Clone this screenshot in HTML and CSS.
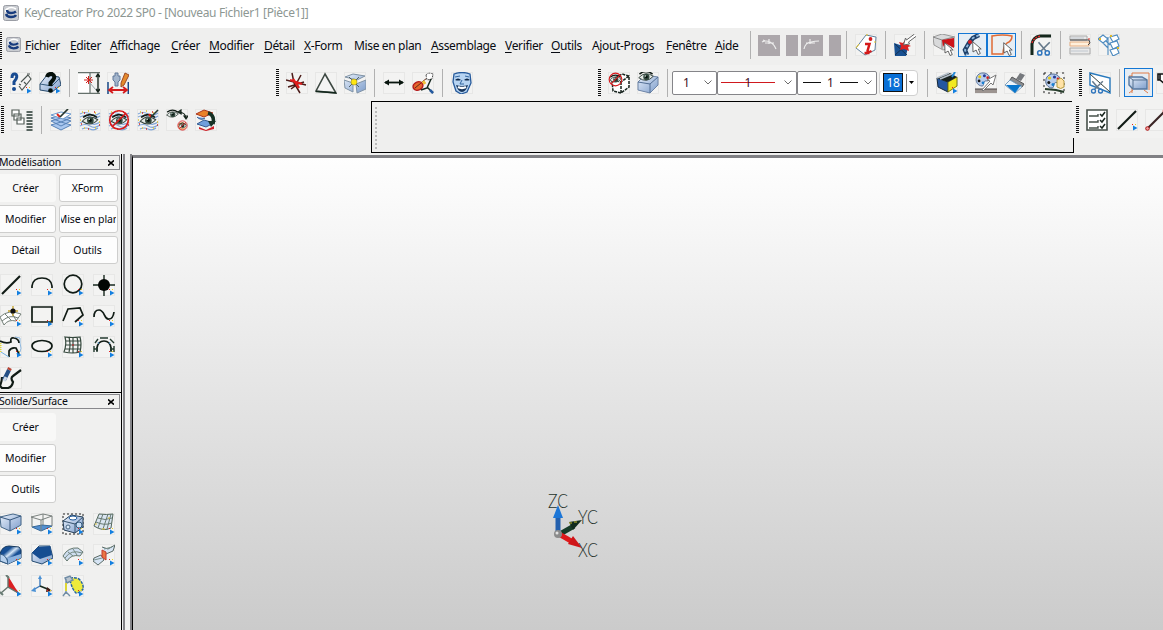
FILE: index.html
```html
<!DOCTYPE html>
<html lang="fr">
<head>
<meta charset="utf-8">
<title>KeyCreator Pro 2022 SP0</title>
<link rel="stylesheet" href="styles.css">
</head>
<body>
<svg class="defs" width="0" height="0">
  <defs>
    <linearGradient id="steel" x1="0" y1="0" x2="1" y2="1"><stop offset="0" stop-color="#e8f0fb"/><stop offset="1" stop-color="#7d9dcb"/></linearGradient>
    <linearGradient id="deep" x1="0" y1="0" x2="1" y2="1"><stop offset="0" stop-color="#164f95"/><stop offset=".3" stop-color="#174f94"/><stop offset=".45" stop-color="#d6e7f7"/><stop offset=".6" stop-color="#174f94"/><stop offset="1" stop-color="#1d5fae"/></linearGradient>
  </defs>
  <symbol id="logo" viewBox="0 0 16 16"><rect x=".5" y=".5" width="15" height="15" rx="2" fill="#c9ccd1" stroke="#9a9da4"/><path d="M13 4Q8 1 4 4T7 7.500Q11 8 13 6" fill="none" stroke="#fff" stroke-width="1.6"/><path d="M4 5Q4 8 8 8Q11 8 13 6.500M3 9Q4 12 8 12Q12 12 13 10" fill="none" stroke="#173b7d" stroke-width="2.4"/></symbol>
  <symbol id="more" viewBox="0 0 22 22"><path d="M17 16.5v5l4.5-2.5z" fill="#137fe0"/><path d="M16 15h1v1h-1z" fill="#e02020"/><path d="M19 15h1v1h-1z" fill="#e8d020"/></symbol>
  <symbol id="eye" viewBox="0 0 22 22"><path d="M1 12Q10 2 21 10Q12 20 1 12z" fill="#e3e8e5" stroke="#34423b" stroke-width="1.3"/><circle cx="11.5" cy="11" r="4.3" fill="#33493f"/><circle cx="11.5" cy="11" r="1.8" fill="#07110c"/><circle cx="10" cy="9.5" r="1" fill="#dce9e3"/><path d="M2 7Q11 0 20 7" class="k" stroke-width=".8"/></symbol>
  <symbol id="waves" viewBox="0 0 22 22"><path d="M1 5q5-3 10 0t10-1M1 8q5-3 10 0t10-1M1 14q5-3 10 0t10-1M1 17q5-3 10 0t10-1M3 20q4-2 8 0t8-1" fill="none" stroke="#7fa5d8" stroke-width="1.2"/><path d="M3 3h1m5-1h1m6 2h1M1 11h1m18 2h1M5 19h1m10 0h1" stroke="#e3c92a" stroke-width="1.5"/><path d="M5 4h1m9-1h1M2 15h1m17 1h1M9 20h1" stroke="#d02b24" stroke-width="1.3"/></symbol>
  <symbol id="no" viewBox="0 0 22 22"><circle cx="11" cy="11" r="9.3" fill="none" stroke="#d8191c" stroke-width="1.6"/><path d="M4.5 17.5L17.5 4.5" stroke="#d8191c" stroke-width="1.6"/></symbol>
  <symbol id="cursor" viewBox="0 0 10 14"><path d="M.7.7L9.2 8H6.3l2 4.5-2.2 1-2-4.5L1 11z" fill="#fff" stroke="#555" stroke-width=".9"/></symbol>
  <symbol id="scissors" viewBox="0 0 12 12"><path d="M2 1l6 7M11 1L4 8" stroke="#66798a" stroke-width="1.3"/><circle cx="3" cy="9.5" r="1.700" fill="none" stroke="#2f75bd" stroke-width="1.2"/><circle cx="9" cy="9.5" r="1.700" fill="none" stroke="#2f75bd" stroke-width="1.2"/></symbol>
  <symbol id="palette" viewBox="0 0 16 16"><path d="M8 1C16 1 17 10 12 9.5S10 15 7 15C-2 14-1 1 8 1z" fill="#b9cdec" stroke="#526c93"/><circle cx="4.5" cy="5" r="1.6" fill="#e6ca19"/><circle cx="9.5" cy="4" r="1.6" fill="#253c99"/><circle cx="3.8" cy="9.5" r="1.5" fill="#151515"/><circle cx="13" cy="6" r="1.4" fill="#d51e1e"/><circle cx="8" cy="11.5" r="1.5" fill="#187fd1"/></symbol>
</svg>

<header class="titlebar"><svg class="logo"><use href="#logo"/></svg><h1>KeyCreator Pro 2022 SP0 - [Nouveau Fichier1 [Pièce1]]</h1></header>

<nav class="menubar">
  <i class="grip edge"></i><svg class="logo small"><use href="#logo"/></svg>
  <ul class="menu">
    <li class="w35"><u>F</u>ichier</li><li class="w30"><u>E</u>diter</li><li class="w51"><u>A</u>ffichage</li><li class="w28"><u>C</u>réer</li><li class="w45"><u>M</u>odifier</li><li class="w30"><u>D</u>étail</li><li class="w40"><u>X</u>-Form</li><li class="w67">Mise en plan</li><li class="w64"><u>A</u>ssemblage</li><li class="w36"><u>V</u>erifier</li><li class="w31"><u>O</u>utils</li><li class="w64">Ajout-Progs</li><li class="w39"><u>F</u>enêtre</li><li class="w25"><u>A</u>ide</li>
  </ul>
  <div class="tools history">
    <i class="sep"></i>
    <svg class="block"><path d="M4 7q4-2 8 0 4 2 6 7M11 4v5M7 8h9M5 5l2 1" fill="none" stroke="#eee" stroke-width="1.2"/></svg><span class="block slim"></span><svg class="block near"><path d="M3 14q1-6 7-7 4-1 8-1M9 4v5M5 8h9" fill="none" stroke="#eee" stroke-width="1.2"/></svg><span class="block slim"></span>
  </div>
  <div class="tools">
    <i class="sep"></i>
    <svg class="icon" viewBox="0 0 22 22"><path d="M1 14L11 1 21 3 20 16 10 21z" fill="#fff" stroke="#62819d"/><path d="M1 14l3-4M11 1h2M20 7v2" stroke="#e4c52a"/><circle cx="15.500" cy="5" r="1.900" fill="#d41919"/><path d="M10 10h4.500l-2 7q0 2 4 0M9.500 19h5" fill="none" stroke="#d41919" stroke-width="2.5"/></svg>
    <i class="sep"></i>
    <svg class="icon" viewBox="0 0 22 22"><path d="M0 9l6 2 4-2 4 4-2 9H1z" fill="#185091"/><path d="M1 10l12 11M11 12L1 21" stroke="#153050"/><path d="M5 8l4 1 2-3 1 4 5 2-3 1 1 4-5-2-4 1 1-4z" fill="#d92224"/><path d="M20.500 0l-8 6-1-2-2 7 6-1-1-2 8-6" fill="#fff" stroke="#666"/></svg>
    <i class="sep"></i>
    <svg class="icon" viewBox="0 0 22 22"><path d="M0 3l9-3 13 3v9l-12 4-9-5z" fill="#d9dadb" stroke="#999"/><path d="M0 3l9 3 12-3M9 6v9" fill="none" stroke="#888"/><path d="M9 6l12-2v10l-9-5-2 4z" fill="#cc1318"/><use href="#cursor" x="11" y="8" width="10" height="14"/></svg>
    <div class="pair"><span class="tile on"><svg viewBox="0 0 22 22"><path d="M17 1l-6 3-4 5-4 7 2 5" fill="none" stroke="#1d3f68" stroke-width="4.500"/><path d="M17 1l-6 3-4 5-4 7 2 5" fill="none" stroke="#91b8dd" stroke-width="1.8" stroke-dasharray="3 2"/><circle cx="8" cy="8" r="2" fill="#d51b1f"/><use href="#cursor" x="10" y="7" width="10" height="14"/></svg></span><span class="tile on"><svg viewBox="0 0 22 22"><path d="M1 2Q12 0 21 2Q21 7 16 9 12 12 12 20H1z" fill="#eceff1" stroke="#e06b35" stroke-width="1.5"/><use href="#cursor" x="12" y="8" width="10" height="14"/></svg></span></div>
    <i class="sep close"></i>
    <svg class="icon" viewBox="0 0 22 22"><path d="M2 21V10Q3 3 10 2h11" fill="none" stroke="#14271c" stroke-width="3"/><path d="M2 9Q4 3 11 2" fill="none" stroke="#db2929" stroke-dasharray="2 1" stroke-width="1.5"/><use href="#scissors" x="6" y="7" width="15" height="15"/></svg>
    <i class="sep"></i>
    <svg class="icon" viewBox="0 0 22 22"><path d="M1 2h17v4H1zM1 14h20v6H1z" fill="#e9e9e9" stroke="#aaa"/><path d="M1 8h19v4H1z" fill="#fff0dc" stroke="#e5ad80"/><path d="M1 6h19l1 3-2 2" fill="none" stroke="#444"/><path d="M2 4h13M2 17h17" stroke="#c0c7cf"/><path d="M20 4v2" stroke="#d92b20"/></svg>
    <svg class="icon" viewBox="0 0 22 22"><path d="M0 5l5-4 5 4-5 4zM12 3l7-2 2 4-6 3zM12 9l7-2 2 5-6 3zM12 16l7-2 2 5-6 3zM10 3v18M5 9l5 5M8 7l4 4" fill="#fff" stroke="#4c8abf" stroke-width="1.1"/><path d="M1 5h2M12 2h2M19 14h2" stroke="#dfb928" stroke-width="2"/></svg>
  </div>
</nav>

<section class="toolrow main">
  <div class="tools g1">
    <i class="grip edge"></i>
    <svg class="icon" viewBox="0 0 22 22"><path d="M2 6Q2 1.500 5 2Q8 3 6 7L4 10v3" fill="none" stroke="#184b91" stroke-width="3"/><circle cx="4" cy="17" r="2" fill="#184b91"/><path d="M9 14l3 4 9-11-3-4M11 10l7-7M9 12l2 1M14 10l2 2M17 2h3" fill="none" stroke="#4c5551" stroke-width="1.1"/><use href="#more"/></svg>
    <svg class="icon" viewBox="0 0 22 22"><path d="M1 12l7-9 12 2 2 8-9 7-12-2z" fill="url(#steel)" stroke="#274a6c"/><path d="M1 12l12 2 8-8" fill="none" stroke="#365c7e"/><path d="M8 5Q9 1.500 13 2Q17 4 14 8L11.500 11v3" fill="none" stroke="#05100b" stroke-width="4"/><circle cx="11.500" cy="18.5" r="2.3" fill="#05100b"/><use href="#more"/></svg>
    <i class="sep"></i>
    <svg class="icon" viewBox="0 0 22 22"><path d="M0 0h12v21H0z" fill="#fff"/><path d="M0 .7h22M0 21.3h22M12 1v20" stroke="#65706b" stroke-width="1.2"/><path d="M20 3v16M18 5l2-3 2 3M18 17l2 3 2-3" fill="none" stroke="#17241d" stroke-width="1.4"/><path d="M6 8h9M10.500 4v8M8 5l6 6M8 11l6-6" stroke="#d3201c"/><path d="M12 11l6 7" stroke="#9aa6ab"/></svg>
    <svg class="icon" viewBox="0 0 22 22"><path d="M8 1h3v3h2v4l-2 2v4H8v-4L6 8V4h2z" fill="#a3b5cc" stroke="#607999"/><path d="M14 11l4-10 4 2-5 10-3 2z" fill="#e58a2d" stroke="#9c4a24"/><path d="M1 10v12M21.3 10v12" stroke="#174887" stroke-width="1.5"/><path d="M2 18h18M6 15l-4 3 4 3M16 15l4 3-4 3" fill="none" stroke="#d41b1d" stroke-width="1.8"/></svg>
  </div>
  <div class="tools g2">
    <i class="grip"></i>
    <svg class="icon" viewBox="0 0 22 22"><path d="M0 8l20 5M6 1l2 10 6 10M15 3l-6 11-4 3M2 15l16-5" fill="none" stroke="#4b1b18" stroke-width="1.5"/><path d="M4 8l12 4M7 7l6 9" stroke="#e01d1d" stroke-width="2.3"/></svg>
    <svg class="icon" viewBox="0 0 22 22"><path d="M10 2L1 19l20 2z" fill="#f4f4f4" stroke="#3d4842" stroke-width="1.6"/><path d="M1 19.4l20 1.4" stroke="#12271c" stroke-width="1.5"/></svg>
    <svg class="icon" viewBox="0 0 22 22"><path d="M1 5l8-3 12 2-8 4zM0 8l9 3v9l-8-4zM12 12l10-4v9l-9 4z" fill="url(#steel)" stroke="#8093a5"/><path d="M5 5l10 10M15 5L5 15" stroke="#344" stroke-width=".8"/><circle cx="10" cy="10" r="3" fill="#ffe610" stroke="#9a8b22" stroke-width=".6"/></svg>
    <i class="sep"></i>
    <svg class="icon" viewBox="0 0 22 22"><path d="M2 10.5h18" stroke="#08150e" stroke-width="1.8"/><path d="M1 10.5l5-3v6zM21 10.5l-5-3v6z" fill="#08150e"/></svg>
    <svg class="icon" viewBox="0 0 22 22"><ellipse cx="6" cy="14" rx="5" ry="4" transform="rotate(-25 6 14)" fill="#e6642b" stroke="#b41d1e" stroke-width="1.5"/><path d="M3 16l6-5M10 10l5-4" stroke="#5f2b18"/><path d="M11 9l2 3" stroke="#f1bf35" stroke-width="3"/><path d="M14 3q2-3 7-1l-1 5-5 1z" fill="#fff" stroke="#555" stroke-dasharray="2 1"/><path d="M19 7l-4 9-6 2M15 15l6 6" fill="none" stroke="#14261d" stroke-width="1.5"/><path d="M18 18l3 3" stroke="#2359a0" stroke-width="2.500"/></svg>
    <i class="sep"></i>
    <svg class="icon" viewBox="0 0 22 22"><path d="M3 2q8-3 16 0l1 9-4 9-6 2-5-3-3-9z" fill="#b7d4f2" stroke="#265a9b" stroke-width="1.3"/><path d="M4 8q3-3 6 0-3 1-6 0zM13 8q3-3 6 0-3 1-6 0z" fill="#0d2748"/><path d="M11 8l-2 4h4M4 5l5-1M14 4l4 1" fill="none" stroke="#32669f"/><path d="M5 13q6 2 12 0-2 7-6 7t-6-7z" fill="#17365d"/><path d="M7 15q4 2 8 0" stroke="#fff" stroke-width="2.500" fill="none"/></svg>
  </div>
  <div class="tools g3">
    <i class="grip"></i>
    <svg class="icon" viewBox="0 0 22 22"><path d="M4 8l10-6 7 2v11l-8 6-8-2zM4 8l9 2 8-6M13 10v11" fill="#fff" stroke="#17231d" stroke-width="1.5" stroke-dasharray="3 1"/><use href="#eye" x="1" y="1" width="13" height="13"/><use href="#no" width="15" height="15"/></svg>
    <svg class="icon" viewBox="0 0 22 22"><path d="M1 10l7-7 13 2v8l-8 8-12-3z" fill="url(#steel)" stroke="#6d84a6"/><path d="M1 10l12 2 8-7M13 12v9" fill="none" stroke="#526e94"/><use href="#eye" x="0" y="-3" width="18" height="16"/></svg>
    <i class="sep"></i>
  </div>
  <div class="combo narrow"><span>1</span><svg viewBox="0 0 8 5"><path d="M.5.5L4 4 7.5.5"/></svg></div>
  <div class="combo color"><span class="line red">1</span><svg viewBox="0 0 8 5"><path d="M.5.5L4 4 7.5.5"/></svg></div>
  <div class="combo style"><span class="dash"></span><span>1</span><span class="dash"></span><svg viewBox="0 0 8 5"><path d="M.5.5L4 4 7.5.5"/></svg></div>
  <div class="swatch"><b>18</b><i></i><svg viewBox="0 0 5 3"><path d="M0 0h5L2.5 3z"/></svg></div>
  <div class="tools g4">
    <i class="sep"></i>
    <svg class="icon" viewBox="0 0 22 22"><path d="M1 6l11 4v10L2 15z" fill="#2457a0" stroke="#15283a"/><path d="M12 10l9-5v9l-9 6z" fill="#f2e920" stroke="#777719"/><path d="M1 6l13-5 7 4-9 5z" fill="#18211e"/><path d="M1 6l12-5M4 7l12-5" stroke="#b4bfca" stroke-width="1.800"/><path d="M16 5l3-5" stroke="#268bd9" stroke-width="2"/><use href="#more"/></svg>
    <i class="sep"></i>
    <svg class="icon" viewBox="0 0 22 22"><use href="#palette" width="16" height="15"/><path d="M0 17h22v4H0z" fill="#9c9490"/><path d="M0 17h22" stroke="#4b4545"/><path d="M7 18l8-9-3-1 9-5-3 10-2-2-8 8z" fill="#fff" stroke="#777"/></svg>
    <svg class="icon" viewBox="0 0 22 22"><path d="M12 7l4-6 5 2-4 6z" fill="#76797d"/><path d="M8 5l12 7-2 3L6 8z" fill="#898c90" stroke="#555"/><path d="M6 8l12 7-7 6L1 13z" fill="#edf4fa" stroke="#7c9fbc"/><path d="M2 13h15l-6 8z" fill="#0876cc"/></svg>
    <i class="sep"></i>
    <svg class="icon" viewBox="0 0 22 22"><path d="M1 1h20v20H1z" fill="none" stroke="#222" stroke-dasharray="2 4"/><use href="#palette" x="1" y="1" width="18" height="16"/><path d="M14 8l4-2 3 3v6q-3 3-7 0z" fill="#ffe2a6" stroke="#b79c42"/><path d="M2 17l11 1 8 2" fill="none" stroke="#263c2a" stroke-width="2"/></svg>
  </div>
  <div class="tools g5">
    <i class="grip"></i>
    <svg class="icon" viewBox="0 0 22 22"><path d="M1 1l20 5v15L9 16 1 13z" fill="#fff" stroke="#2879bd" stroke-width="1.4"/><path d="M1 2l20 18" stroke="#354039"/><use href="#scissors" x="1" y="8" width="14" height="14"/></svg>
    <i class="sep"></i>
    <span class="tile on"><svg viewBox="0 0 22 22"><path d="M4 1h17v17M1 4h3M4 1v20M1 21l4-3M20 21l-4-3" fill="none" stroke="#e17c48"/><path d="M1 5h13l5 3v9H5l-4-4z" fill="url(#steel)" stroke="#55779e" stroke-width="1.4"/><path d="M1 5l4 3h14M5 8v8" fill="none" stroke="#55708f"/></svg></span>
    <svg class="icon cut" viewBox="0 0 22 22"><path d="M2 2h16v10H9L4 8H2zM4 2v6" fill="#fff" stroke="#111" stroke-width="1.6"/></svg>
  </div>
</section>

<section class="toolrow layers">
  <div class="tools g6">
    <i class="grip"></i>
    <svg class="icon" viewBox="0 0 22 22"><path d="M1 1h7v6H1zM3 5h7v6H3zM6 9h7v6H6zM6 15v-2M8 15h5" fill="#fff" stroke="#555f59" stroke-width="1.2"/><path d="M18.500 2v20" stroke="#586560" stroke-width="6" stroke-dasharray="2 1"/></svg>
    <i class="sep"></i>
    <svg class="icon" viewBox="0 0 22 22"><path d="M1 16l10-3 10 3-10 5zM1 12l10-3 10 3-10 5zM1 9l10-3 10 3-10 4z" fill="#a9c7ef" stroke="#5882b7"/><path d="M1 6l10-3 10 2-8 5z" fill="#fff" stroke="#6d9bce"/><path d="M7 5l3 3" stroke="#df251c" stroke-width="2"/><path d="M10 8l8-8" stroke="#26362e" stroke-width="1.7"/></svg>
    <svg class="icon" viewBox="0 0 22 22"><use href="#waves"/><use href="#eye" x="2" y="3" width="18" height="17"/></svg>
    <svg class="icon" viewBox="0 0 22 22"><use href="#waves"/><use href="#eye" x="2" y="3" width="18" height="17"/><use href="#no"/></svg>
    <svg class="icon" viewBox="0 0 22 22"><use href="#waves"/><use href="#eye" x="2" y="3" width="18" height="17"/><path d="M12 5l2 3" stroke="#e22218" stroke-width="2"/><path d="M14 8l7-7" stroke="#263b31" stroke-width="1.6"/></svg>
    <svg class="icon" viewBox="0 0 22 22"><use href="#eye" x="0" y="-1" width="13" height="13"/><circle cx="16" cy="17" r="4" fill="#f0b080"/><use href="#eye" x="12" y="12" width="9" height="10"/><use href="#no" x="11" y="11" width="11" height="11"/><path d="M12 3q8 0 8 7M12 3l3-2v4zM20 10l-2-3h4z" fill="none" stroke="#17271e" stroke-width="1.2"/></svg>
    <svg class="icon" viewBox="0 0 22 22"><path d="M1 5l8-4 9 3-9 4z" fill="#e98129" stroke="#ac351e"/><path d="M2 8q4 4 8 1M2 15l7-4 10 3-8 4z" fill="#709fdc" stroke="#355c91"/><path d="M4 18l7 3 8-4v3l-8 2-7-2z" fill="#cc2027"/><path d="M13 4q7 2 5 11" fill="none" stroke="#173225" stroke-width="3.500"/><path d="M13 12h8l-5 6z" fill="#173225"/></svg>
  </div>
  <div class="dock"><i></i></div>
  <div class="tools g7">
    <i class="grip"></i>
    <svg class="icon" viewBox="0 0 22 22"><path d="M1 1h20v20H1z" fill="#fff" stroke="#47514b" stroke-width="1.6"/><path d="M3 7h9V5M3 13h9v-2M3 19h9v-2" fill="none" stroke="#47514b" stroke-width="1.4"/><path d="M14 5l2 2 3-4M14 11l2 2 3-4M14 17l2 2 3-4" fill="none" stroke="#18251e" stroke-width="1.5"/></svg>
    <svg class="icon push" viewBox="0 0 22 22"><path d="M2 20L20 2" class="k"/><use href="#more"/></svg>
    <svg class="icon" viewBox="0 0 22 22"><path d="M2 20L20 2" stroke="#3a2424" stroke-width="2"/><circle cx="2.500" cy="19.500" r="1.800" fill="#f0a0a0" stroke="#b01616"/><circle cx="20" cy="2" r="2.3" fill="#de3030"/></svg>
  </div>
</section>

<main class="workspace">
  <aside class="sidebar">
    <section class="panel first">
      <h2>Modélisation<svg viewBox="0 0 6 6"><path d="M0 .5l6 5M6 .5l-6 5"/></svg></h2>
      <div class="buttons"><button class="flat">Créer</button><button>XForm</button><button>Modifier</button><button class="tight"><span>Mise en plan</span></button><button>Détail</button><button>Outils</button></div>
      <div class="palette">
        <svg class="icon" viewBox="0 0 22 22"><path d="M2 20L20 2" class="k"/><use href="#more"/></svg>
        <svg class="icon" viewBox="0 0 22 22"><path d="M1 14V12Q2 4 11 4T21 12v2" class="k thin"/><use href="#more"/></svg>
        <svg class="icon" viewBox="0 0 22 22"><circle cx="11" cy="10" r="8.800" class="k thin"/><use href="#more"/></svg>
        <svg class="icon" viewBox="0 0 22 22"><path d="M0 11h22M11 1v21" stroke="#17291f" stroke-width="1.4"/><circle cx="11" cy="11" r="6" fill="#030604"/><use href="#more"/></svg>
        <svg class="icon" viewBox="0 0 22 22"><path d="M0 12Q8 4 21 9L16 16Q8 14 4 20zM5 9l6 6M11 7l5 8M2 16Q10 9 18 13" fill="#fff" stroke="#758179"/><path d="M8 6h10M13 1v10" stroke="#c6a328" stroke-width="1.3"/><circle cx="13" cy="6" r="2.600" fill="#111"/><use href="#more"/></svg>
        <svg class="icon" viewBox="0 0 22 22"><path d="M1 2h20v15H1z" class="k thin"/><use href="#more"/></svg>
        <svg class="icon" viewBox="0 0 22 22"><path d="M1 16L6 4l12-1 3 7-8 7" class="k thin"/><use href="#more"/></svg>
        <svg class="icon" viewBox="0 0 22 22"><path d="M1 12Q1 5 6 5C12 5 11 15 16 14Q20 14 21 7" class="k thin"/><use href="#more"/></svg>
        <svg class="icon" viewBox="0 0 22 22"><path d="M15 1l5 1 0 5q2 6 0 9l-4 2" fill="#f5f5f5" stroke="#8fb9df"/><path d="M0 5q6 3 11 1-1-5 3-4 5 1 5 5M9 21V15q2-4 7-3l3 6" class="k thin"/><path d="M.5 7v10" stroke="#e5da32" stroke-width="2" stroke-dasharray="1 1"/><path d="M1 16l8 5" stroke="#74b1e3"/><use href="#more"/></svg>
        <svg class="icon" viewBox="0 0 22 22"><ellipse cx="11" cy="10" rx="10" ry="5.500" class="k thin"/><use href="#more"/></svg>
        <svg class="icon" viewBox="0 0 22 22"><path d="M3 1q7 1 15 0Q20 8 18 16 11 18 2 16 5 8 3 1zM7 1q2 8 0 15M11 2v15M15 1q2 8 0 16M4 5h15M4 9h15M3 13h15" fill="none" stroke="#35483d" stroke-width="1.2"/><path d="M11 8v2" stroke="#d32828"/><use href="#more"/></svg>
        <svg class="icon" viewBox="0 0 22 22"><path d="M4 15V12Q5 5 11 5T18 12v3" class="k thin"/><path d="M1 10v6M4 11v5M18 11v5M21 10v6M1 13h3m14 0h3M2 7l3-4M17 3l4 4M7 2h8" fill="none" stroke="#233a2f" stroke-width="1.400"/><path d="M5 6l1 2M17 6l-1 2" stroke="#498ac0"/><use href="#more"/></svg>
        <svg class="icon" viewBox="0 0 22 22"><path d="M2 10Q2 14 0 19L2 21H8Q12 20 13 15Q10 11 13 9L21 3" class="k"/><path d="M4 13L9 3" stroke="#244f85" stroke-width="4"/><path d="M9 3l1-2" stroke="#b84434" stroke-width="4"/><path d="M4 14l2-4" stroke="#ccd9e7" stroke-width="3"/></svg>
      </div>
    </section>
    <section class="panel second">
      <h2>Solide/Surface<svg viewBox="0 0 6 6"><path d="M0 .5l6 5M6 .5l-6 5"/></svg></h2>
      <div class="buttons single"><button class="flat">Créer</button><button>Modifier</button><button>Outils</button></div>
      <div class="palette">
        <svg class="icon" viewBox="0 0 22 22"><path d="M0 4l13-3 8 2v9l-11 6L1 14z" fill="url(#steel)" stroke="#456788"/><path d="M0 4l10 3 11-4M10 7v11" fill="none" stroke="#36577c"/><use href="#more"/></svg>
        <svg class="icon" viewBox="0 0 22 22"><path d="M1 14l10-2 10 1-11 5z" fill="#538fd0" stroke="#366899"/><path d="M0 4l12-3 9 2-11 4zM1 4v10M21 3v10M10 7v11M12 1v11" fill="none" stroke="#7a817e"/><use href="#more"/></svg>
        <svg class="icon" viewBox="0 0 22 22"><path d="M1 1h20v20H1z" fill="none" stroke="#222" stroke-dasharray="2 2"/><path d="M1 8l8-6 12 2v10l-8 6-11-3z" fill="url(#steel)" stroke="#253e57"/><path d="M1 8l12 3 8-7M13 11v9" fill="none" stroke="#35516d"/><ellipse cx="11" cy="5" rx="4" ry="2" fill="#fff" stroke="#19569a"/><circle cx="17" cy="12" r="3" fill="#c6ddf5" stroke="#345a7e"/><circle cx="6" cy="14" r="2" fill="#dcebfa" stroke="#486783"/><use href="#more"/></svg>
        <svg class="icon" viewBox="0 0 22 22"><path d="M6 1q8 1 14 0l-2 14q-8 4-17-2z" fill="#dae5f1" stroke="#53675d"/><path d="M10 1L5 15M15 1l-5 15M18 1l-4 15M5 5q7 3 14 0M3 9q8 4 16 1" fill="none" stroke="#687b73"/><path d="M2 11h2M9 16h3M15 5h2" stroke="#e3c536"/><use href="#more"/></svg>
        <svg class="icon" viewBox="0 0 22 22"><path d="M0 10q2-8 9-8l10 1q3 2 2 7v4L8 20 0 17z" fill="url(#deep)" stroke="#17395d"/><path d="M0 10q7 1 8 10l-8-3z" fill="#b8d1ed" stroke="#355c83"/><path d="M8 14l13-4v4L8 20z" fill="#8db3de"/><use href="#more"/></svg>
        <svg class="icon" viewBox="0 0 22 22"><path d="M1 9l7-7h11l3 12-11 6-10-3z" fill="url(#steel)" stroke="#254c72"/><path d="M1 9l6-6 12-1 2 9-12 4z" fill="#164d91"/><use href="#more"/></svg>
        <svg class="icon" viewBox="0 0 22 22"><path d="M1 12Q6 3 16 4l5 4-3 4Q9 10 5 17z" fill="#cfdef0" stroke="#64776e"/><path d="M3 14q6-9 17-5M6 8l5 4M11 5l4 6" fill="none" stroke="#73877e"/><use href="#more"/></svg>
        <svg class="icon" viewBox="0 0 22 22"><path d="M9 3l6 2 7-4-2 6-7 3M1 14l7-3 3 5-6 5-5-4z" fill="#d6e4f4" stroke="#5b6b66"/><path d="M9 6l4 2v8l-4-3z" fill="#e97644" stroke="#c3392e"/><path d="M1 16l8-2M11 5l8-2" stroke="#78908c"/><use href="#more"/></svg>
        <svg class="icon" viewBox="0 0 22 22"><path d="M8 1v11l11 7zM8 3q0 9 11 15z" fill="#db1f22"/><path d="M8 1v11l12 7M8 12l-7 6" fill="none" stroke="#65756d" stroke-width="1.4"/><path d="M6 0l3 3M0 17l3 3" stroke="#697c74" stroke-width="2"/><use href="#more"/></svg>
        <svg class="icon" viewBox="0 0 22 22"><path d="M9 11V2M9 11l-7 4" stroke="#3b79bc" stroke-width="1.4"/><path d="M9 11l10 4" stroke="#172b20" stroke-width="1.7"/><path d="M7 4l2-4 2 4zM4 12l-4 4 5 1z" fill="#4a91d5"/><path d="M16 12l5 4-6 1z" fill="#401c16"/><use href="#more"/></svg>
        <svg class="icon" viewBox="0 0 22 22"><path d="M8 3q5-1 9 1 5 5 4 10-3 4-7 4Q10 14 8 5z" fill="#eeea3c" stroke="#2463a2" stroke-width="1.4" stroke-dasharray="3 1"/><path d="M3 3l5-2 3 4-6 3zM4 4v15M4 17l-3 4M4 17l4 4" fill="#b9c4ce" stroke="#708ca5" stroke-width="1.4"/><path d="M4 8v8" stroke="#ded633" stroke-width="2"/><use href="#more"/></svg>
      </div>
    </section>
  </aside>
  <div class="splitter"></div>
  <section class="viewport">
    <svg class="triad" viewBox="0 0 60 72">
      <path d="M14 43l14-8" stroke="#173c28" stroke-width="5"/><path d="M23 31l13-2-9 10z" fill="#102c1e"/><path d="M23 32h3m2-1h3" stroke="#c9bc31"/>
      <path d="M12 43V24" stroke="#2360ae" stroke-width="5"/><path d="M7 27L12 14l5 13z" fill="#1c76d7"/>
      <path d="M13 43l12 7" stroke="#df191b" stroke-width="5"/><path d="M27 45l9 12-14-4z" fill="#cf1418"/>
      <circle cx="12" cy="43" r="4" fill="#8b8b8b"/><circle cx="11" cy="42" r="1.500" fill="#e2e2e2"/>
      <text x="2" y="17" textLength="20" lengthAdjust="spacingAndGlyphs">ZC</text><text x="32" y="33" textLength="20" lengthAdjust="spacingAndGlyphs">YC</text><text x="32" y="66" textLength="20" lengthAdjust="spacingAndGlyphs">XC</text>
    </svg>
  </section>
</main>
</body>
</html>
```

FILE: styles.css
```css
* { box-sizing: border-box; }
body { margin: 0; width: 1163px; height: 630px; overflow: hidden; background: #f0f0ef; color: #080b12; font: 12px "Noto Sans", "Open Sans", sans-serif; }
svg { display: block; flex: none; }
.defs { position: absolute; }
.k { fill: none; stroke: #101b15; stroke-width: 2.2; }
.k.thin { stroke-width: 1.7; }

.titlebar { display: flex; align-items: center; height: 28px; padding: 0 0 3px 3px; background: #fff; }
.titlebar h1 { margin: 0 0 0 5px; color: #8d9793; font-size: 12px; font-weight: 400; line-height: 16px; letter-spacing: -.35px; white-space: nowrap; }
.logo { width: 16px; height: 16px; }
.logo.small { width: 15px; height: 15px; margin-left: 4px; }

.menubar { display: flex; align-items: center; height: 37px; padding-bottom: 3px; background: #efefee; }
.menubar > .logo { margin-bottom: 2px; }
.menu { display: flex; gap: 10px; width: 715px; margin: 0 0 0 4px; padding: 0; list-style: none; flex: none; }
.menu li { flex: none; letter-spacing: -.35px; line-height: 17px; white-space: nowrap; }
.menu u { text-decoration-thickness: 1px; text-underline-offset: 2px; }
.w25 { width: 25px; } .w28 { width: 28px; } .w30 { width: 30px; } .w31 { width: 31px; } .w35 { width: 35px; }
.w36 { width: 36px; } .w39 { width: 39px; } .w40 { width: 40px; } .w45 { width: 45px; } .w51 { width: 51px; }
.w64 { width: 64px; } .w67 { width: 67px; }

.tools { display: flex; align-items: center; gap: 7px; flex: none; }
.history { gap: 6px; margin: 0 4px 0 9px; }
.sep { width: 1px; height: 28px; margin: 0 1px; background: #b1b1b1; flex: none; }
.sep.close { margin-left: -2px; }
.grip { width: 3px; height: 27px; flex: none; background: repeating-linear-gradient(#111 0 1px, #f3f3f3 1px 2px); }
.grip.edge { width: 2px; margin-right: 1px; }
.menubar > .grip { margin-right: 0; }
.icon { width: 22px; height: 22px; background: #f3f3f2; box-shadow: inset 0 0 0 1px #e7e7e6; overflow: hidden; }
.block { width: 22px; height: 21px; background: #aca7ab; }
.block.slim { width: 12px; }
.block.near { margin-left: -3px; }
.pair { display: flex; margin-left: -4px; }
.tile { display: grid; place-items: center; width: 29px; height: 24px; border: 1px solid #1377d4; background: #e5edf4; }
.tile svg { width: 22px; height: 22px; }
.toolrow .tile { width: 29px; height: 29px; margin-left: -4px; }
.cut { margin-left: -4px; }

.toolrow { display: flex; background: #f2f2f1; }
.toolrow.main { align-items: center; height: 36px; padding-bottom: 1px; }
.g2 { margin-left: 147px; } .g3 { margin-left: 125px; } .g4 { margin-left: 8px; } .g5 { margin-left: 14px; }
.combo { display: flex; align-items: center; justify-content: space-between; height: 24px; padding: 0 4px 0 10px; border: 1px solid #858589; border-radius: 2px; background: #fff; flex: none; color: #421126; }
.combo svg { width: 8px; height: 5px; }
.combo path { fill: none; stroke: #6c6c6c; }
.combo.narrow { width: 45px; margin-left: 3px; }
.combo.color, .combo.style { width: 80px; }
.combo.color { padding-left: 3px; }
.combo.style { padding-left: 5px; }
.line.red { width: 54px; text-align: center; background: linear-gradient(#d0191e, #d0191e) center / 100% 1px no-repeat; }
.dash { width: 18px; height: 1px; background: #111; }
.swatch { display: flex; align-items: center; width: 39px; height: 26px; margin-left: 2px; padding-left: 3px; border: 1px solid #d0d0d0; border-radius: 4px; background: #fff; flex: none; }
.swatch b { width: 20px; height: 19px; border: 1px solid #111; background: #0a70d6; color: #fff; font-weight: 400; line-height: 17px; text-align: center; letter-spacing: -.4px; }
.swatch i { width: 1px; height: 18px; margin: 0 2px 0 3px; background: #777; }
.swatch svg { width: 5px; height: 3px; }

.toolrow.layers { height: 53px; background: #f0f0ef; }
.g6 { width: 371px; height: 37px; padding-left: 1px; }
.dock { width: 703px; height: 52px; padding: 5px 3px; border: 1px solid #000; background: #efefee; flex: none; }
.dock i { display: block; width: 2px; height: 42px; background: repeating-linear-gradient(#bbb 0 2px, #efefee 2px 4px); }
.g7 { height: 37px; margin-left: -2px; padding-left: 4px; background: #f2f2f1; }
.push { margin-left: 1px; }

.workspace { display: flex; height: 476px; }
.sidebar { width: 121px; padding-top: 1px; overflow: hidden; flex: none; background: #f0f0ef; }
.panel.first { height: 237px; }
.panel.second { padding-top: 1px; border-top: 1px solid #000; }
.panel h2 { display: flex; align-items: center; justify-content: space-between; width: 123px; height: 15px; margin: 0 0 0 -3px; padding: 0 8px 2px 1px; border: 1px solid #88888c; font-size: 10.500px; font-weight: 400; line-height: 12px; letter-spacing: -.15px; }
.panel h2 svg { width: 6px; height: 6px; margin: 2px -3px 0 0; }
.panel h2 path { stroke: #000; stroke-width: 1.700; }
.buttons { display: grid; grid-template-columns: 59px 59px; gap: 3px; margin: 4px 0 0 -3px; }
.buttons.single { grid-template-columns: 59px; }
.buttons button { height: 28px; padding: 0 2px 0 0; border: 1px solid #cececd; border-radius: 3px; background: #fdfdfd; color: #080b12; font: 10.500px "Noto Sans", "Open Sans", sans-serif; letter-spacing: -.1px; overflow: hidden; white-space: nowrap; }
.buttons .flat { border-color: #f8f8f7; background: #f8f8f7; }
.buttons .tight { padding: 0 1px; }
.tight span { display: flex; justify-content: center; overflow: hidden; }
.palette { display: grid; grid-template-columns: repeat(4, 22px); gap: 9px; margin-top: 10px; }
.splitter { width: 11px; border-left: 1px solid #000; background: linear-gradient(90deg, #eee 0 1px, #858589 1px 3px, #f0f0ef 3px 8px, #858589 8px); flex: none; }
.viewport { position: relative; flex: 1; margin-top: 1px; border-top: 3px solid #808084; border-left: 1px solid #000; background: linear-gradient(#fefefe, #cbcbcb); }
.triad { position: absolute; left: 413px; top: 333px; width: 60px; height: 72px; }
.triad text { fill: #25322b; font: 300 19px Lato, sans-serif; }
```
